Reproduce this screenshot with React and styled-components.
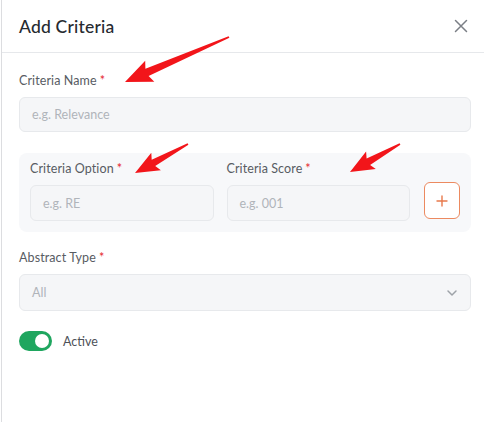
import React from 'react';
import styled, { createGlobalStyle } from 'styled-components';

const GlobalStyle = createGlobalStyle`
  html, body {
    margin: 0;
    padding: 0;
    background: #ffffff;
  }
  body {
    font-family: Lato, 'Open Sans', Arial, sans-serif;
  }
`;

const Modal = styled.div`
  position: relative;
  width: 483px;
  height: 422px;
  box-sizing: border-box;
  border-left: 1px solid #dcdde0;
  margin-left: 1px;
  background: #fff;
`;

const Header = styled.div`
  height: 52px;
  display: flex;
  align-items: center;
  justify-content: space-between;
  padding: 0 13px 0 17px;
  border-bottom: 1px solid #e6e8eb;
`;

const Title = styled.h2`
  margin: 0;
  font-size: 17.5px;
  font-weight: 500;
  color: #262a30;
  letter-spacing: 0.2px;
`;

const CloseButton = styled.button`
  border: none;
  background: none;
  padding: 0;
  width: 20px;
  height: 20px;
  display: flex;
  align-items: center;
  justify-content: center;
  color: #7b7f86;
`;

const Body = styled.div`
  padding: 20px 13px 0 17px;
  display: flex;
  flex-direction: column;
`;

const Field = styled.div`
  display: flex;
  flex-direction: column;
  gap: 8px;
  flex: ${(p) => (p.grow ? 1 : 'none')};
`;

const Label = styled.label`
  font-size: 12.5px;
  line-height: 16px;
  color: #585c63;
  letter-spacing: 0.1px;
  & > span {
    color: #e5262d;
    margin-left: 3px;
  }
`;

const Input = styled.div`
  height: ${(p) => p.h || 35}px;
  box-sizing: border-box;
  border: 1px solid #e7e9ec;
  border-radius: 6px;
  background: #f5f6f8;
  display: flex;
  align-items: center;
  justify-content: space-between;
  padding: 0 12px;
  font-size: 12.5px;
  color: #b0b4ba;
`;

const OptionPanel = styled.div`
  margin-top: 21px;
  background: #f7f8fa;
  border-radius: 8px;
  padding: 8px 11px 11px;
  display: flex;
  align-items: flex-end;
  gap: 13px;
`;

const AddButton = styled.button`
  width: 36px;
  height: 37px;
  margin-left: 1px;
  margin-bottom: 2px;
  box-sizing: border-box;
  border: 1px solid #ec8a60;
  border-radius: 6px;
  background: #fff;
  color: #e8794c;
  display: flex;
  align-items: center;
  justify-content: center;
  padding: 0;
`;

const Spaced = styled.div`
  margin-top: ${(p) => p.top}px;
`;

const ToggleRow = styled.div`
  margin-top: 20px;
  display: flex;
  align-items: center;
  gap: 11px;
  font-size: 12.5px;
  color: #4d5158;
`;

const Switch = styled.div`
  width: 33px;
  height: 20px;
  border-radius: 10px;
  background: #1fa65f;
  display: flex;
  align-items: center;
  justify-content: flex-end;
  padding: 0 3px;
  box-sizing: border-box;
`;

const Knob = styled.div`
  width: 14px;
  height: 14px;
  border-radius: 50%;
  background: #fff;
`;

const Overlay = styled.svg`
  position: absolute;
  left: -2px;
  top: 0;
  pointer-events: none;
`;

function arrowPoints(tx, ty, px, py, headLen, headHalf, neckHalf) {
  const len = Math.hypot(px - tx, py - ty);
  const dx = (px - tx) / len;
  const dy = (py - ty) / len;
  const nx = -dy;
  const ny = dx;
  const bx = px - dx * headLen;
  const by = py - dy * headLen;
  const pts = [
    [tx + nx * 0.9, ty + ny * 0.9],
    [bx + nx * neckHalf, by + ny * neckHalf],
    [bx + nx * headHalf - dx * 3, by + ny * headHalf - dy * 3],
    [px, py],
    [bx - nx * headHalf - dx * 3, by - ny * headHalf - dy * 3],
    [bx - nx * neckHalf, by - ny * neckHalf],
    [tx - nx * 0.9, ty - ny * 0.9],
  ];
  return pts.map((p) => p.map((v) => v.toFixed(1)).join(',')).join(' ');
}

const arrows = [
  [229, 37, 125, 82, 24, 11.5, 4],
  [188, 144, 135, 173, 21, 10, 3.6],
  [400, 144, 350, 172, 21, 10, 3.6],
];

function Required({ children }) {
  return (
    <Label>
      {children}
      <span>*</span>
    </Label>
  );
}

export default function App() {
  return (
    <>
      <GlobalStyle />
      <Modal>
        <Header>
          <Title>Add Criteria</Title>
          <CloseButton aria-label="Close">
            <svg width="14" height="14" viewBox="0 0 14 14" fill="none" stroke="currentColor" strokeWidth="1.5" strokeLinecap="round">
              <path d="M1.5 1.5l11 11M12.5 1.5l-11 11" />
            </svg>
          </CloseButton>
        </Header>
        <Body>
          <Field>
            <Required>Criteria Name</Required>
            <Input>e.g. Relevance</Input>
          </Field>
          <OptionPanel>
            <Field grow>
              <Required>Criteria Option</Required>
              <Input h={36}>e.g. RE</Input>
            </Field>
            <Field grow>
              <Required>Criteria Score</Required>
              <Input h={36}>e.g. 001</Input>
            </Field>
            <AddButton aria-label="Add option">
              <svg width="12" height="12" viewBox="0 0 12 12" fill="none" stroke="currentColor" strokeWidth="1.4" strokeLinecap="round">
                <path d="M6 1v10M1 6h10" />
              </svg>
            </AddButton>
          </OptionPanel>
          <Spaced top={18}>
            <Field>
              <Required>Abstract Type</Required>
              <Input h={37}>
                All
                <svg width="12" height="8" viewBox="0 0 12 8" fill="none" stroke="#9ea2a8" strokeWidth="1.5" strokeLinecap="round" strokeLinejoin="round">
                  <path d="M2 2l4 4 4-4" />
                </svg>
              </Input>
            </Field>
          </Spaced>
          <ToggleRow>
            <Switch>
              <Knob />
            </Switch>
            Active
          </ToggleRow>
        </Body>
        <Overlay width="484" height="422" viewBox="0 0 484 422">
          {arrows.map((a, i) => (
            <polygon key={i} points={arrowPoints(...a)} fill="#f2151a" />
          ))}
        </Overlay>
      </Modal>
    </>
  );
}
